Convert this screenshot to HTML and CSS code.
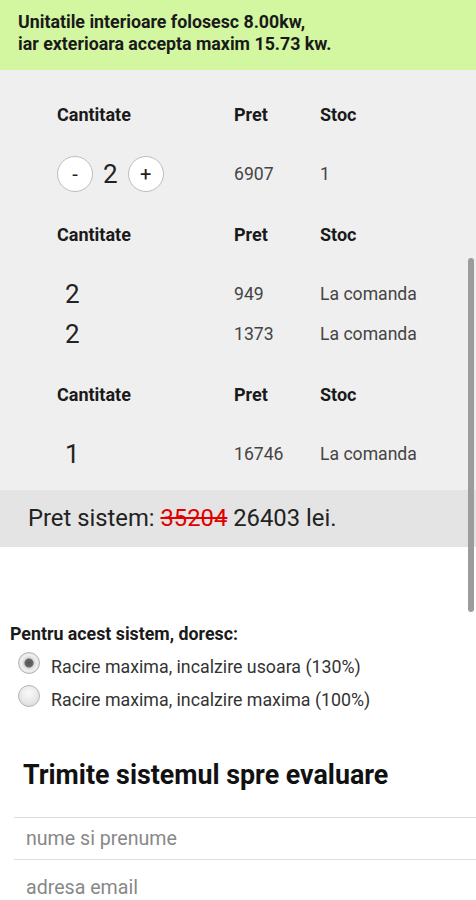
FILE: index.html
```html
<html>
    <head>
        <meta charset="utf-8">
        <link rel="stylesheet" href="styles.css">
    </head>
    <body>
        <div class="notice">
            Unitatile interioare folosesc 8.00kw,<br>
            iar exterioara accepta maxim 15.73 kw.
        </div>

        <div class="products">
            <div class="block">
                <div class="row head">
                    <span>Cantitate</span><span>Pret</span><span>Stoc</span>
                </div>
                <div class="row">
                    <span class="qty">
                        <span class="btn">-</span>
                        <span class="count">2</span>
                        <span class="btn">+</span>
                    </span>
                    <span>6907</span>
                    <span>1</span>
                </div>
            </div>
            <div class="block">
                <div class="row head">
                    <span>Cantitate</span><span>Pret</span><span>Stoc</span>
                </div>
                <div class="row">
                    <span class="count fixed">2</span>
                    <span>949</span>
                    <span>La comanda</span>
                </div>
                <div class="row">
                    <span class="count fixed">2</span>
                    <span>1373</span>
                    <span>La comanda</span>
                </div>
            </div>
            <div class="block">
                <div class="row head">
                    <span>Cantitate</span><span>Pret</span><span>Stoc</span>
                </div>
                <div class="row">
                    <span class="count fixed">1</span>
                    <span>16746</span>
                    <span>La comanda</span>
                </div>
            </div>
        </div>

        <div class="total">
            Pret sistem: <span class="old">35204</span> 26403 lei.
        </div>

        <div class="options">
            <div class="options-title">Pentru acest sistem, doresc:</div>
            <label class="option"><input type="radio" name="mode" checked> Racire maxima, incalzire usoara (130%)</label>
            <label class="option"><input type="radio" name="mode"> Racire maxima, incalzire maxima (100%)</label>
        </div>

        <div class="send">
            <h2>Trimite sistemul spre evaluare</h2>
            <input class="field" type="text" placeholder="nume si prenume">
            <input class="field email" type="text" placeholder="adresa email">
        </div>

        <div class="scrollbar"></div>
    </body>
</html>
```

FILE: styles.css
```css
body {
    margin: 0;
    font-family: Roboto, "Noto Sans", sans-serif;
    color: #222;
    background: #fff;
    overflow: hidden;
}
.notice {
    background-color: #d3f6a1;
    padding: 11px 18px 15px;
    font-size: 17.8px;
    font-weight: bold;
    line-height: 22px;
    color: #1a1a1a;
}
.products {
    background-color: #efefef;
    padding: 24px 0 16px 57px;
}
.block {
    margin-bottom: 20px;
}
.block:last-child {
    margin-bottom: 0;
}
.row {
    display: grid;
    grid-template-columns: 177px 86px 1fr;
    height: 40px;
    align-items: center;
    font-size: 17.6px;
    color: #444;
}
.row.head {
    font-size: 18px;
    font-weight: bold;
    color: #1a1a1a;
    margin-bottom: 20px;
}
.qty {
    display: flex;
    align-items: center;
}
.btn {
    width: 34px;
    height: 34px;
    border: 1px solid #bdbdbd;
    border-radius: 50%;
    background: #fff;
    display: flex;
    align-items: center;
    justify-content: center;
    font-size: 20px;
    color: #222;
}
.count {
    font-size: 26px;
    color: #222;
    margin: 0 10px;
}
.count.fixed {
    margin: 0 0 0 8px;
}
.total {
    background-color: #e4e4e4;
    height: 57px;
    line-height: 57px;
    padding-left: 28px;
    font-size: 23.8px;
    color: #222;
}
.old {
    color: #e00000;
    text-decoration: line-through;
}
.options {
    padding: 76px 10px 0;
}
.options-title {
    font-size: 17.8px;
    font-weight: bold;
    color: #1a1a1a;
    margin-bottom: 6px;
}
.option {
    display: flex;
    align-items: center;
    height: 33px;
    font-size: 17.8px;
    color: #333;
}
.option input {
    appearance: none;
    width: 22px;
    height: 22px;
    margin: 0 11px 8px 8px;
    border: 1px solid #b4b4b4;
    border-radius: 50%;
    background: radial-gradient(circle at 50% 35%, #fafafa 0%, #e6e6e6 60%, #d4d4d4 100%);
    box-sizing: border-box;
}
.option input:checked {
    background: radial-gradient(circle, #555 0, #666 4px, #d6d6d6 5px, #f2f2f2 8px, #d8d8d8 11px);
}
.send {
    padding: 44px 0 0 14px;
}
.send h2 {
    margin: 0 0 0 9px;
    font-size: 26.8px;
    font-weight: bold;
    color: #111;
    line-height: 30px;
}
.field {
    display: block;
    width: 100%;
    box-sizing: border-box;
    border: 0;
    border-top: 1px solid #ddd;
    background: transparent;
    font-family: Roboto, sans-serif;
    font-size: 19.6px;
    padding: 0 12px;
    height: 42px;
    outline: none;
}
.field:first-of-type {
    margin-top: 27px;
}
.field.email {
    height: 56px;
}
.field::placeholder {
    color: #888;
}
.scrollbar {
    position: absolute;
    right: 2px;
    top: 258px;
    width: 6px;
    height: 354px;
    border-radius: 3px;
    background-color: #9c9c9c;
}
```
